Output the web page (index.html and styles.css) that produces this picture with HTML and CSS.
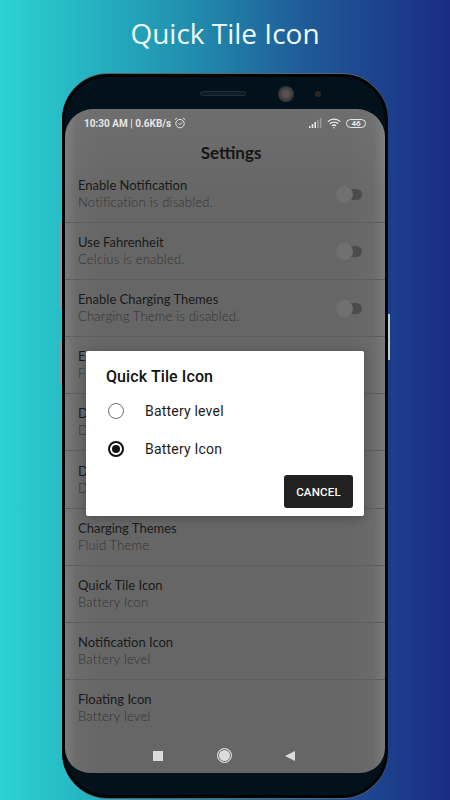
FILE: index.html
```html
<!DOCTYPE html>
<html lang="en">
<head>
  <meta charset="UTF-8">
  <meta name="viewport" content="width=device-width, initial-scale=1.0">
  <title>Quick Tile Icon</title>
  <link rel="stylesheet" href="styles.css">
</head>
<body>

  <h1 class="headline">Quick Tile Icon</h1>

  <div class="phone">
    <span class="side-btn side-btn-top"></span>
    <span class="side-btn side-btn-low"></span>
    <span class="side-btn side-btn-right"></span>

    <div class="bezel">
      <span class="speaker"></span>
      <span class="camera"></span>
      <span class="sensor"></span>
    </div>

    <div class="screen">
      <div class="status-bar">
        <div class="status-left">
          <span>10:30 AM | 0.6KB/s</span>
          <svg class="alarm" viewBox="0 0 12 12" width="12" height="12" fill="none" stroke="#e4e4e4" stroke-width="1">
            <circle cx="6" cy="6.6" r="4.2"/>
            <path d="M4.2 6.4 L5.6 7.8 L8 5.2"/>
            <path d="M0.8 2.8 L3 0.9 M11.2 2.8 L9 0.9"/>
          </svg>
        </div>
        <div class="status-right">
          <svg viewBox="0 0 13 10" width="13" height="10">
            <rect x="0" y="8" width="1.6" height="2" fill="#e6e6e6"/>
            <rect x="2.7" y="6" width="1.6" height="4" fill="#e6e6e6"/>
            <rect x="5.4" y="4" width="1.6" height="6" fill="#e6e6e6"/>
            <rect x="8.1" y="2" width="1.6" height="8" fill="#9a9a9a"/>
            <rect x="10.8" y="0" width="1.6" height="10" fill="#9a9a9a"/>
          </svg>
          <svg viewBox="0 0 14 11" width="14" height="11" fill="none" stroke="#eee" stroke-width="1.3">
            <path d="M0.8 3.6 C4.2 0.2 9.8 0.2 13.2 3.6"/>
            <path d="M2.9 5.7 C5.2 3.5 8.8 3.5 11.1 5.7"/>
            <path d="M5 7.8 C6.2 6.8 7.8 6.8 9 7.8"/>
            <circle cx="7" cy="9.8" r="0.7" fill="#eee" stroke="none"/>
          </svg>
          <span class="battery">46</span>
        </div>
      </div>

      <div class="page-title">Settings</div>

      <div class="settings-list">
        <div class="row">
          <div><div class="row-title">Enable Notification</div><div class="row-sub">Notification is disabled.</div></div>
          <span class="toggle"></span>
        </div>
        <div class="row">
          <div><div class="row-title">Use Fahrenheit</div><div class="row-sub">Celcius is enabled.</div></div>
          <span class="toggle"></span>
        </div>
        <div class="row">
          <div><div class="row-title">Enable Charging Themes</div><div class="row-sub">Charging Theme is disabled.</div></div>
          <span class="toggle"></span>
        </div>
        <div class="row">
          <div><div class="row-title">Enable Floating Icon</div><div class="row-sub">Floating Icon is disabled.</div></div>
        </div>
        <div class="row">
          <div><div class="row-title">Display Temperature</div><div class="row-sub">Displayed in notification.</div></div>
        </div>
        <div class="row">
          <div><div class="row-title">Display Voltage</div><div class="row-sub">Displayed in notification.</div></div>
        </div>
        <div class="row">
          <div><div class="row-title">Charging Themes</div><div class="row-sub">Fluid Theme</div></div>
        </div>
        <div class="row">
          <div><div class="row-title">Quick Tile Icon</div><div class="row-sub">Battery Icon</div></div>
        </div>
        <div class="row">
          <div><div class="row-title">Notification Icon</div><div class="row-sub">Battery level</div></div>
        </div>
        <div class="row row-last">
          <div><div class="row-title">Floating Icon</div><div class="row-sub">Battery level</div></div>
        </div>
      </div>

      <div class="nav-bar">
        <span class="nav-square"></span>
        <span class="nav-home"></span>
        <span class="nav-back"></span>
      </div>

      <div class="dialog">
        <div class="dialog-title">Quick Tile Icon</div>
        <div class="dialog-options">
          <div class="option"><span class="radio"></span>Battery level</div>
          <div class="option"><span class="radio checked"></span>Battery Icon</div>
        </div>
        <div class="dialog-actions">
          <button class="cancel-btn">CANCEL</button>
        </div>
      </div>
    </div>
  </div>

</body>
</html>
```

FILE: styles.css
```css
* {
  margin: 0;
  padding: 0;
  box-sizing: border-box;
}

body {
  width: 450px;
  height: 800px;
  overflow: hidden;
  background: linear-gradient(90deg, #2bd3d3 0%, #2192b0 40%, #1f5a98 68%, #1a2c84 100%);
  font-family: 'Lato', sans-serif;
  display: flex;
  flex-direction: column;
  align-items: center;
}

.headline {
  height: 74px;
  padding-top: 14px;
  font-family: 'Open Sans', sans-serif;
  font-size: 28px;
  line-height: 38px;
  font-weight: 400;
  color: #eefafa;
}

.phone {
  position: relative;
  width: 326px;
  height: 724px;
  flex-shrink: 0;
  background: #03111a;
  border: 3px solid #010507;
  border-radius: 46px;
  box-shadow: 0 -1px 0 #5d6468, 0 1px 0 #5a6468;
  display: flex;
  flex-direction: column;
  align-items: stretch;
}

.side-btn {
  position: absolute;
  width: 2px;
  background: #8f9aa0;
}

.side-btn-top {
  left: -5px;
  top: 145px;
  height: 87px;
}

.side-btn-low {
  left: -5px;
  top: 263px;
  height: 45px;
}

.side-btn-right {
  right: -5px;
  top: 237px;
  width: 2.5px;
  height: 46px;
  background: #c4c9cc;
}

.bezel {
  height: 32px;
  display: flex;
  align-items: center;
  padding-left: 135px;
  padding-top: 1px;
}

.speaker {
  width: 46px;
  height: 5px;
  border-radius: 3px;
  background: #0d1d26;
  border: 1px solid #1f2f38;
}

.camera {
  width: 16px;
  height: 16px;
  margin-left: 32px;
  border-radius: 50%;
  background: radial-gradient(circle at 50% 50%, #5a5250 0 25%, #35383a 60%, #2a2e30 100%);
}

.sensor {
  width: 6px;
  height: 6px;
  margin-left: 21px;
  border-radius: 50%;
  background: #2a2a22;
}

.screen {
  position: relative;
  width: 320px;
  height: 664px;
  overflow: hidden;
  border-radius: 28px 28px 25px 25px;
  background:
    linear-gradient(180deg, rgba(255,255,255,0.05), rgba(255,255,255,0) 90px),
    linear-gradient(90deg, #7b7b7b 0, #6a6a6a 12px, #666 40px, #666 280px, #6a6a6a 308px, #7b7b7b 100%);
  display: flex;
  flex-direction: column;
}

.status-bar {
  height: 27px;
  padding: 1px 19px 0 19px;
  display: flex;
  align-items: center;
  justify-content: space-between;
  font-family: 'Roboto', sans-serif;
  font-size: 10px;
  font-weight: 700;
  color: #e6e6e6;
}

.status-left,
.status-right {
  display: flex;
  align-items: center;
}

.status-left {
  gap: 3px;
}

.status-right {
  gap: 5px;
}

.battery {
  width: 20px;
  height: 9px;
  border: 1px solid #e6e6e6;
  border-radius: 5px;
  font-size: 8px;
  line-height: 7px;
  text-align: center;
}

.page-title {
  height: 30px;
  text-align: center;
  padding-left: 12px;
  padding-top: 7px;
  font-size: 17px;
  line-height: 20px;
  font-weight: 700;
  color: #161616;
}

.settings-list {
  flex: 1;
}

.row {
  height: 57.1px;
  padding: 0 23px 0 13px;
  border-bottom: 1px solid #5e5e5e;
  display: flex;
  align-items: center;
  justify-content: space-between;
}

.row-last {
  border-bottom: none;
}

.row-title {
  font-size: 13px;
  line-height: 17px;
  color: #1a1a1a;
}

.row-sub {
  font-size: 13px;
  line-height: 17px;
  font-weight: 300;
  letter-spacing: 0.2px;
  color: #343434;
}

.toggle {
  position: relative;
  width: 22px;
  height: 11px;
  border-radius: 6px;
  background: #4c4c4c;
}

.toggle::before {
  content: "";
  position: absolute;
  left: -4px;
  top: -3px;
  width: 17px;
  height: 17px;
  border-radius: 50%;
  background: #707070;
}

.nav-bar {
  height: 35px;
  display: flex;
  align-items: center;
  padding-left: 88px;
}

.nav-square {
  width: 10px;
  height: 10px;
  background: #dcdcdc;
}

.nav-home {
  width: 15px;
  height: 15px;
  margin-left: 54px;
  border-radius: 50%;
  background: #dcdcdc;
  border: 1px solid #dcdcdc;
  box-shadow: inset 0 0 0 1px #666;
}

.nav-back {
  width: 0;
  height: 0;
  margin-left: 53px;
  border-top: 5.5px solid transparent;
  border-bottom: 5.5px solid transparent;
  border-right: 10px solid #dcdcdc;
}

.dialog {
  position: absolute;
  left: 21px;
  top: 242px;
  width: 278px;
  height: 165px;
  padding: 16px 11px 8px 20px;
  background: #fff;
  border-radius: 2px;
  box-shadow: 0 2px 10px rgba(0,0,0,0.25);
  font-family: 'Roboto', sans-serif;
  color: #1c1c1c;
}

.dialog-title {
  font-size: 16px;
  line-height: 20px;
  font-weight: 500;
  letter-spacing: 0.1px;
  color: #111;
}

.dialog-options {
  margin-top: 5px;
}

.option {
  height: 38px;
  display: flex;
  align-items: center;
  gap: 21.5px;
  padding-left: 1.5px;
  font-size: 14px;
  letter-spacing: 0.2px;
}

.radio {
  position: relative;
  width: 16px;
  height: 16px;
  border: 1.5px solid #6e6e6e;
  border-radius: 50%;
}

.radio.checked {
  border: 2px solid #111;
}

.radio.checked::before {
  content: "";
  position: absolute;
  left: 2px;
  top: 2px;
  width: 8px;
  height: 8px;
  border-radius: 50%;
  background: #111;
}

.dialog-actions {
  display: flex;
  justify-content: flex-end;
  margin-top: 7px;
}

.cancel-btn {
  width: 69px;
  height: 33px;
  border: none;
  border-radius: 3px;
  background: #212121;
  color: #fff;
  font-family: 'Roboto', sans-serif;
  font-size: 11.5px;
  font-weight: 500;
  letter-spacing: 0.2px;
}
```
